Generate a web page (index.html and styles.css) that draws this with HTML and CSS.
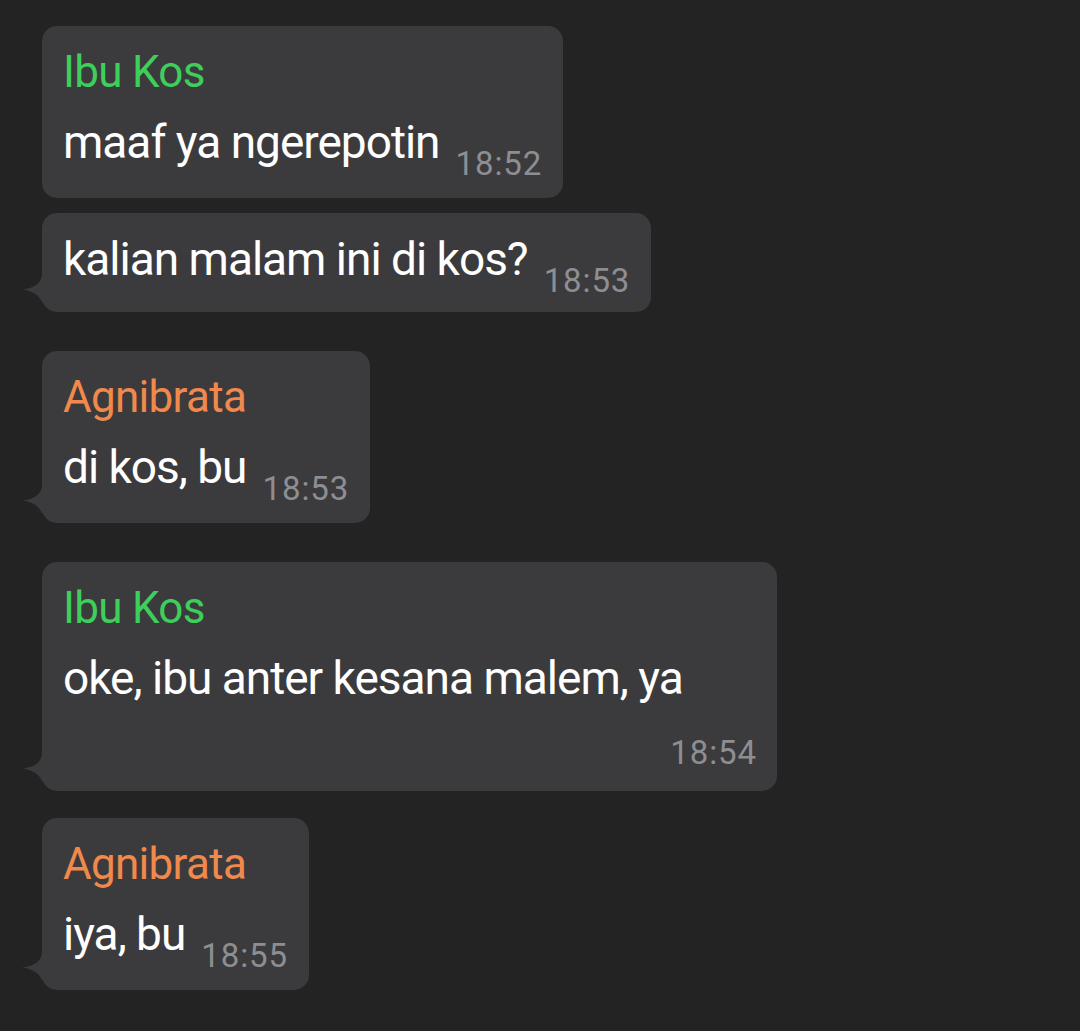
FILE: index.html
```html
<!DOCTYPE html>
<html lang="id">
<head>
<meta charset="utf-8">
<title>Chat</title>
<link rel="stylesheet" href="styles.css">
</head>
<body>
<main class="chat">
  <div class="bubble b1">
    <div class="name green">Ibu Kos</div>
    <div class="line">maaf ya ngerepotin<span class="time">18:52</span></div>
  </div>
  <div class="bubble b2 tail nameless">
    <div class="line">kalian malam ini di kos?<span class="time">18:53</span></div>
    <svg class="tail-shape" viewBox="0 0 26 40" width="26" height="40" aria-hidden="true"><path d="M21 2 C21 12 11 17 0.7 17.3 C8 18.5 17 21 21 30 L26 30 L26 2 Z"/></svg>
  </div>
  <div class="bubble b3 tail">
    <div class="name orange">Agnibrata</div>
    <div class="line">di kos, bu<span class="time">18:53</span></div>
    <svg class="tail-shape" viewBox="0 0 26 40" width="26" height="40" aria-hidden="true"><path d="M21 2 C21 12 11 17 0.7 17.3 C8 18.5 17 21 21 30 L26 30 L26 2 Z"/></svg>
  </div>
  <div class="bubble b4 tail">
    <div class="name green">Ibu Kos</div>
    <div class="line">oke, ibu anter kesana malem, ya</div>
    <div class="time-row"><span class="time">18:54</span></div>
    <svg class="tail-shape" viewBox="0 0 26 40" width="26" height="40" aria-hidden="true"><path d="M21 2 C21 12 11 17 0.7 17.3 C8 18.5 17 21 21 30 L26 30 L26 2 Z"/></svg>
  </div>
  <div class="bubble b5 tail">
    <div class="name orange">Agnibrata</div>
    <div class="line">iya, bu<span class="time">18:55</span></div>
    <svg class="tail-shape" viewBox="0 0 26 40" width="26" height="40" aria-hidden="true"><path d="M21 2 C21 12 11 17 0.7 17.3 C8 18.5 17 21 21 30 L26 30 L26 2 Z"/></svg>
  </div>
</main>
</body>
</html>
```

FILE: styles.css
```css
html, body {
  margin: 0;
  padding: 0;
  background: #232323;
}

body {
  width: 1080px;
  height: 1031px;
  overflow: hidden;
  font-family: Roboto, Inter, "Liberation Sans", sans-serif;
  color: #ffffff;
}

.chat {
  display: flex;
  flex-direction: column;
  align-items: flex-start;
  padding: 26px 0 0 42px;
}

.bubble {
  position: relative;
  box-sizing: border-box;
  max-width: 735px;
  background: #3b3b3d;
  border-radius: 15px;
  padding: 16px 21px 18px 21px;
}

.bubble.nameless {
  padding-top: 16px;
  padding-bottom: 15px;
}

.b2 { margin-top: 15px; }
.b3 { margin-top: 39px; }
.b4 { margin-top: 39px; }
.b5 { margin-top: 27px; }

.name {
  font-size: 44px;
  line-height: 60px;
  letter-spacing: -0.7px;
  white-space: nowrap;
}

.green { color: #3ecf5b; }
.orange { color: #f0894b; }

.line {
  font-size: 46px;
  line-height: 60px;
  letter-spacing: -1px;
  white-space: nowrap;
  margin-top: 10px;
}

.nameless .line {
  margin-top: 0;
}

.time {
  display: inline-block;
  margin-left: 16px;
  font-size: 33px;
  line-height: 33px;
  letter-spacing: 0.9px;
  color: #8e8e92;
  vertical-align: -17px;
}

.time-row {
  text-align: right;
  margin-top: 28px;
  line-height: 33px;
}

.time-row .time {
  margin-left: 0;
  margin-right: -1px;
  vertical-align: baseline;
}

.b4 {
  padding-bottom: 16px;
  width: 735px;
}

.tail-shape {
  position: absolute;
  left: -21px;
  bottom: 0;
  fill: #3b3b3d;
}
```
